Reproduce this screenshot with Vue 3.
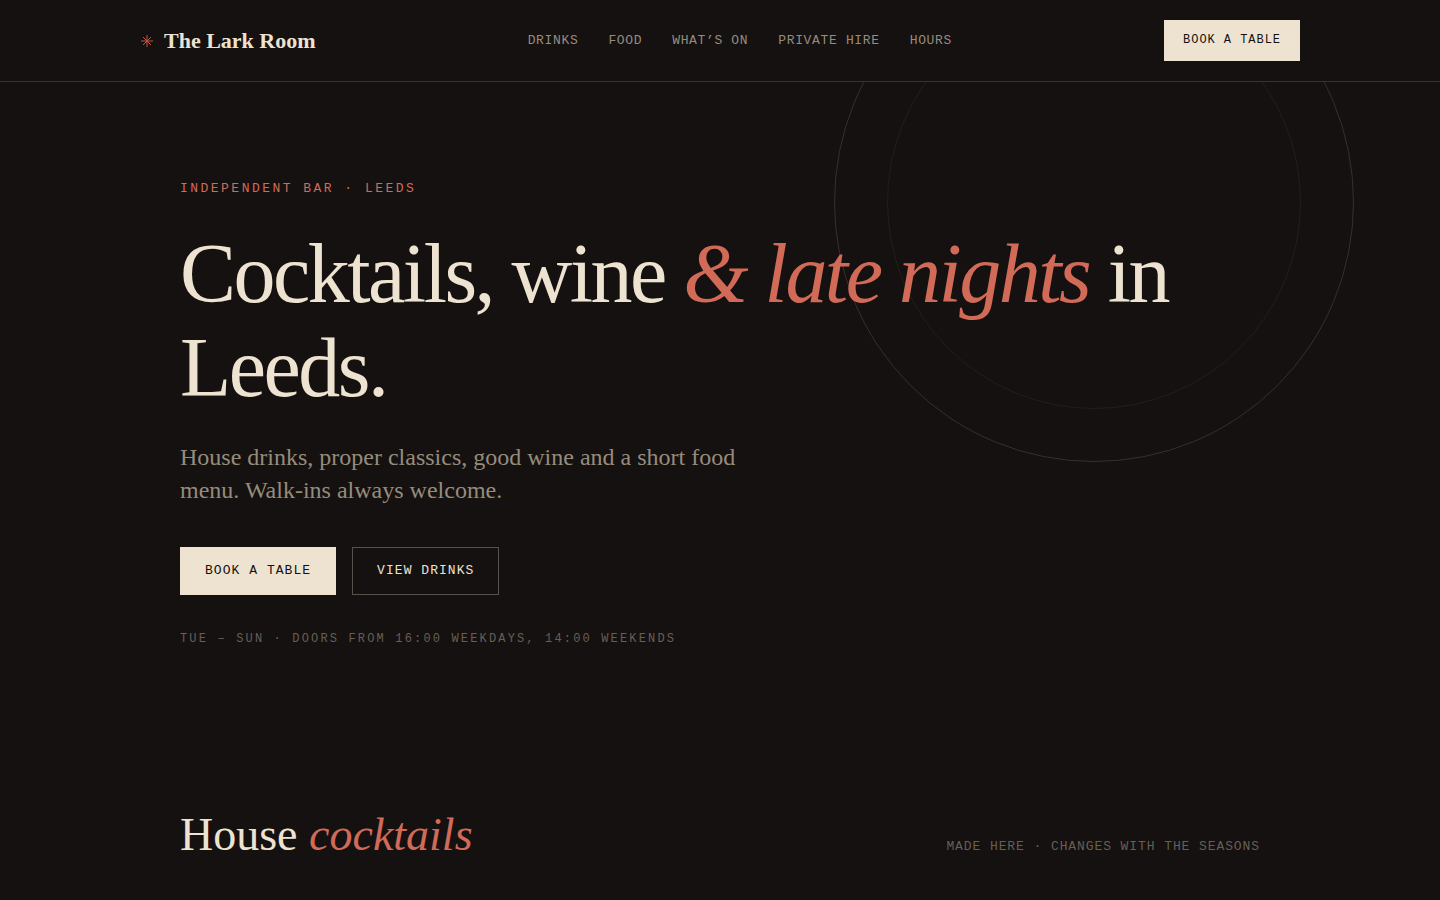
<script setup>
const links = [
  { label: 'Drinks', href: '#drinks' },
  { label: 'Food', href: '#food' },
  { label: 'What’s on', href: '#whats-on' },
  { label: 'Private hire', href: '#private-hire' },
  { label: 'Hours', href: '#hours' },
]
</script>

<template>
  <div class="page">
    <header class="site-header">
      <div class="bar">
        <a class="brand" href="#top">
          <svg class="mark" viewBox="0 0 14 14" aria-hidden="true">
            <path d="M7 1V13M1 7H13M3 3L11 11M11 3L3 11" />
          </svg>
          <span>The Lark Room</span>
        </a>
        <nav class="nav" aria-label="Main">
          <a v-for="link in links" :key="link.href" :href="link.href">{{ link.label }}</a>
        </nav>
        <a class="btn btn-solid btn-small" href="#book">Book a table</a>
      </div>
    </header>

    <main id="top">
      <section class="hero">
        <div class="ring ring-outer" aria-hidden="true"></div>
        <div class="ring ring-inner" aria-hidden="true"></div>
        <div class="wrap">
          <p class="eyebrow">Independent bar · Leeds</p>
          <h1>Cocktails, wine <em>&amp; late nights</em> in Leeds.</h1>
          <p class="lede">House drinks, proper classics, good wine and a short food menu. Walk-ins always welcome.</p>
          <div class="actions">
            <a class="btn btn-solid" href="#book">Book a table</a>
            <a class="btn btn-line" href="#drinks">View drinks</a>
          </div>
          <p class="hours">Tue – Sun · Doors from 16:00 weekdays, 14:00 weekends</p>
        </div>
      </section>

      <section id="drinks" class="drinks">
        <div class="wrap section-head">
          <h2>House <em>cocktails</em></h2>
          <p class="note">Made here · changes with the seasons</p>
        </div>
      </section>
    </main>
  </div>
</template>

<style>
body {
  background: #151110;
}
</style>

<style scoped>
.page {
  --ink: #151110;
  --cream: #ede3d0;
  --coral: #d26a58;
  --muted: #968c7c;
  --dim: #665f54;
  --line: #393431;
  --serif: "Liberation Serif", serif;
  --mono: "Liberation Mono", monospace;
  background: var(--ink);
  color: var(--cream);
  font-family: var(--serif);
  min-height: 100vh;
}

a {
  color: inherit;
  text-decoration: none;
}

h1,
h2,
p {
  margin: 0;
  font-weight: 400;
}

em {
  color: var(--coral);
}

.site-header {
  border-bottom: 1px solid var(--line);
  background: var(--ink);
}

.bar {
  display: flex;
  align-items: center;
  justify-content: space-between;
  max-width: 1160px;
  margin: 0 auto;
  padding: 20px 24px;
}

.brand {
  display: flex;
  align-items: center;
  gap: 10px;
  font-size: 22px;
  line-height: 28px;
  font-weight: 700;
}

.mark {
  width: 14px;
  height: 14px;
  fill: none;
  stroke: #c9503f;
  stroke-width: 1;
}

.nav {
  display: flex;
  gap: 30px;
  font-family: var(--mono);
  font-size: 13px;
  line-height: 20px;
  letter-spacing: 0.05em;
  text-transform: uppercase;
  color: var(--muted);
}

.btn {
  display: inline-block;
  box-sizing: border-box;
  padding: 13px 24px;
  border: 1px solid transparent;
  font-family: var(--mono);
  font-size: 13px;
  line-height: 20px;
  letter-spacing: 0.08em;
  text-transform: uppercase;
}

.btn-solid {
  background: var(--cream);
  border-color: var(--cream);
  color: var(--ink);
}

.btn-line {
  border-color: #57514b;
}

.btn-small {
  padding: 10px 18px;
  font-size: 12px;
  line-height: 19px;
}

.hero {
  position: relative;
  overflow: hidden;
  padding: 97px 24px 72px;
}

.ring {
  position: absolute;
  box-sizing: border-box;
  border: 1px solid #35302e;
  border-radius: 50%;
}

.ring-outer {
  top: -140px;
  right: 6%;
  width: 520px;
  height: 520px;
}

.ring-inner {
  top: -87px;
  right: calc(6% + 53px);
  width: 414px;
  height: 414px;
  border-color: #221e1c;
}

.wrap {
  position: relative;
  max-width: 1080px;
  margin: 0 auto;
}

.eyebrow {
  font-family: var(--mono);
  font-size: 13px;
  line-height: 20px;
  letter-spacing: 0.19em;
  text-transform: uppercase;
  color: var(--coral);
}

h1 {
  margin-top: 28px;
  font-size: 84px;
  line-height: 94px;
  letter-spacing: -0.03em;
}

.lede {
  max-width: 580px;
  margin-top: 26px;
  font-size: 24px;
  line-height: 33px;
  color: var(--muted);
}

.actions {
  display: flex;
  gap: 16px;
  margin-top: 40px;
}

.hours {
  margin-top: 34px;
  font-family: var(--mono);
  font-size: 12px;
  line-height: 20px;
  letter-spacing: 0.18em;
  text-transform: uppercase;
  color: var(--dim);
}

.drinks {
  padding: 88px 24px 40px;
}

.section-head {
  display: flex;
  align-items: baseline;
  justify-content: space-between;
}

h2 {
  font-size: 46px;
  line-height: 52px;
}

.note {
  font-family: var(--mono);
  font-size: 13px;
  line-height: 20px;
  letter-spacing: 0.07em;
  text-transform: uppercase;
  color: var(--dim);
}
</style>
